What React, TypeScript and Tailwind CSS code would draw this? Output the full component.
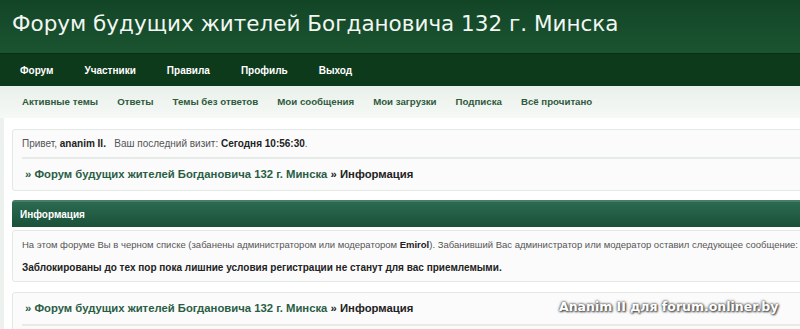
const mainNav = ['Форум', 'Участники', 'Правила', 'Профиль', 'Выход'];
const subNav = ['Активные темы', 'Ответы', 'Темы без ответов', 'Мои сообщения', 'Мои загрузки', 'Подписка', 'Всё прочитано'];

function Breadcrumb() {
  return (
    <div className="px-3 py-2 text-[11.3px] leading-[15px] font-bold text-[#222]">
      <span className="text-[#2a5e44]">» Форум будущих жителей Богдановича 132 г. Минска</span> » Информация
    </div>
  );
}

export default function App() {
  return (
    <div className="w-[800px] h-[329px] overflow-hidden bg-white font-['Liberation_Sans',Arial,sans-serif]">
      {/* Site title */}
      <div className="h-[53px] bg-gradient-to-b from-[#124526] to-[#1b5431] pl-3 pt-[9px]">
        <h1 className="font-['DejaVu_Sans',sans-serif] text-[21.5px] leading-[30px] text-[#f2f7f2] whitespace-nowrap">
          Форум будущих жителей Богдановича 132 г. Минска
        </h1>
      </div>

      {/* Main nav */}
      <div className="h-[33px] bg-[#0e3a1c] border-t border-[#0a2e15] flex items-center gap-[31px] pl-5">
        {mainNav.map((item) => (
          <span key={item} className="text-[10px] font-bold text-white">{item}</span>
        ))}
      </div>

      {/* Sub nav */}
      <div className="h-[32px] bg-gradient-to-b from-[#e9f0ea] to-[#f6f9f6] flex items-center gap-[19px] pl-[22px]">
        {subNav.map((item) => (
          <span key={item} className="text-[9.7px] font-bold text-[#2f5a3d]">{item}</span>
        ))}
      </div>

      {/* Content */}
      <div className="relative border-l-4 border-[#edf1ee] w-[830px] pl-2 pt-[11px]">
        <div className="border border-[#e2e8e4] bg-[#fbfbfc] rounded-[3px]">
          <div className="mx-[9px] py-[6px] text-[10px] leading-[15px] text-[#555] border-b-2 border-[#e6ebe7]">
            Привет, <b className="text-[#222]">ananim II.</b>&nbsp;&nbsp; Ваш последний визит: <b className="text-[#222]">Сегодня 10:56:30</b>.
          </div>
          <Breadcrumb />
        </div>

        <div className="mt-[9px] h-[27px] rounded-t-[3px] border-t-2 border-[#4b7d66] bg-gradient-to-b from-[#2b6a51] to-[#1a5139] flex items-center pl-2">
          <span className="text-[10px] font-bold text-white">Информация</span>
        </div>

        <div className="mt-[3px] border border-[#e2e8e4] bg-[#fbfbfc] rounded-[3px] px-[9px] pt-[6px] pb-[5px]">
          <p className="text-[9.5px] text-[#555] whitespace-nowrap leading-[16px]">
            На этом форуме Вы в черном списке (забанены администратором или модератором <b className="text-[#222]">Emirol</b>). Забанивший Вас администратор или модератор оставил следующее сообщение:
          </p>
          <p className="mt-[7px] text-[10px] font-bold text-[#222] leading-[16px]">
            Заблокированы до тех пор пока лишние условия регистрации не станут для вас приемлемыми.
          </p>
        </div>

        <div className="mt-[10px] border border-[#e2e8e4] bg-[#fbfbfc] rounded-[3px]">
          <div className="border-b-2 border-[#e6ebe7] mx-[9px]">
            <div className="-mx-[9px]"><Breadcrumb /></div>
          </div>
          <div className="h-10" />
        </div>

        {/* Watermark */}
        <div className="absolute left-[555px] top-[180px] font-['DejaVu_Sans',sans-serif] text-[12.5px] font-bold text-white whitespace-nowrap [text-shadow:0_0_3px_#555,0_0_2px_#555,1px_1px_2px_#444]">
          Ananim II для forum.onliner.by
        </div>
      </div>
    </div>
  );
}
